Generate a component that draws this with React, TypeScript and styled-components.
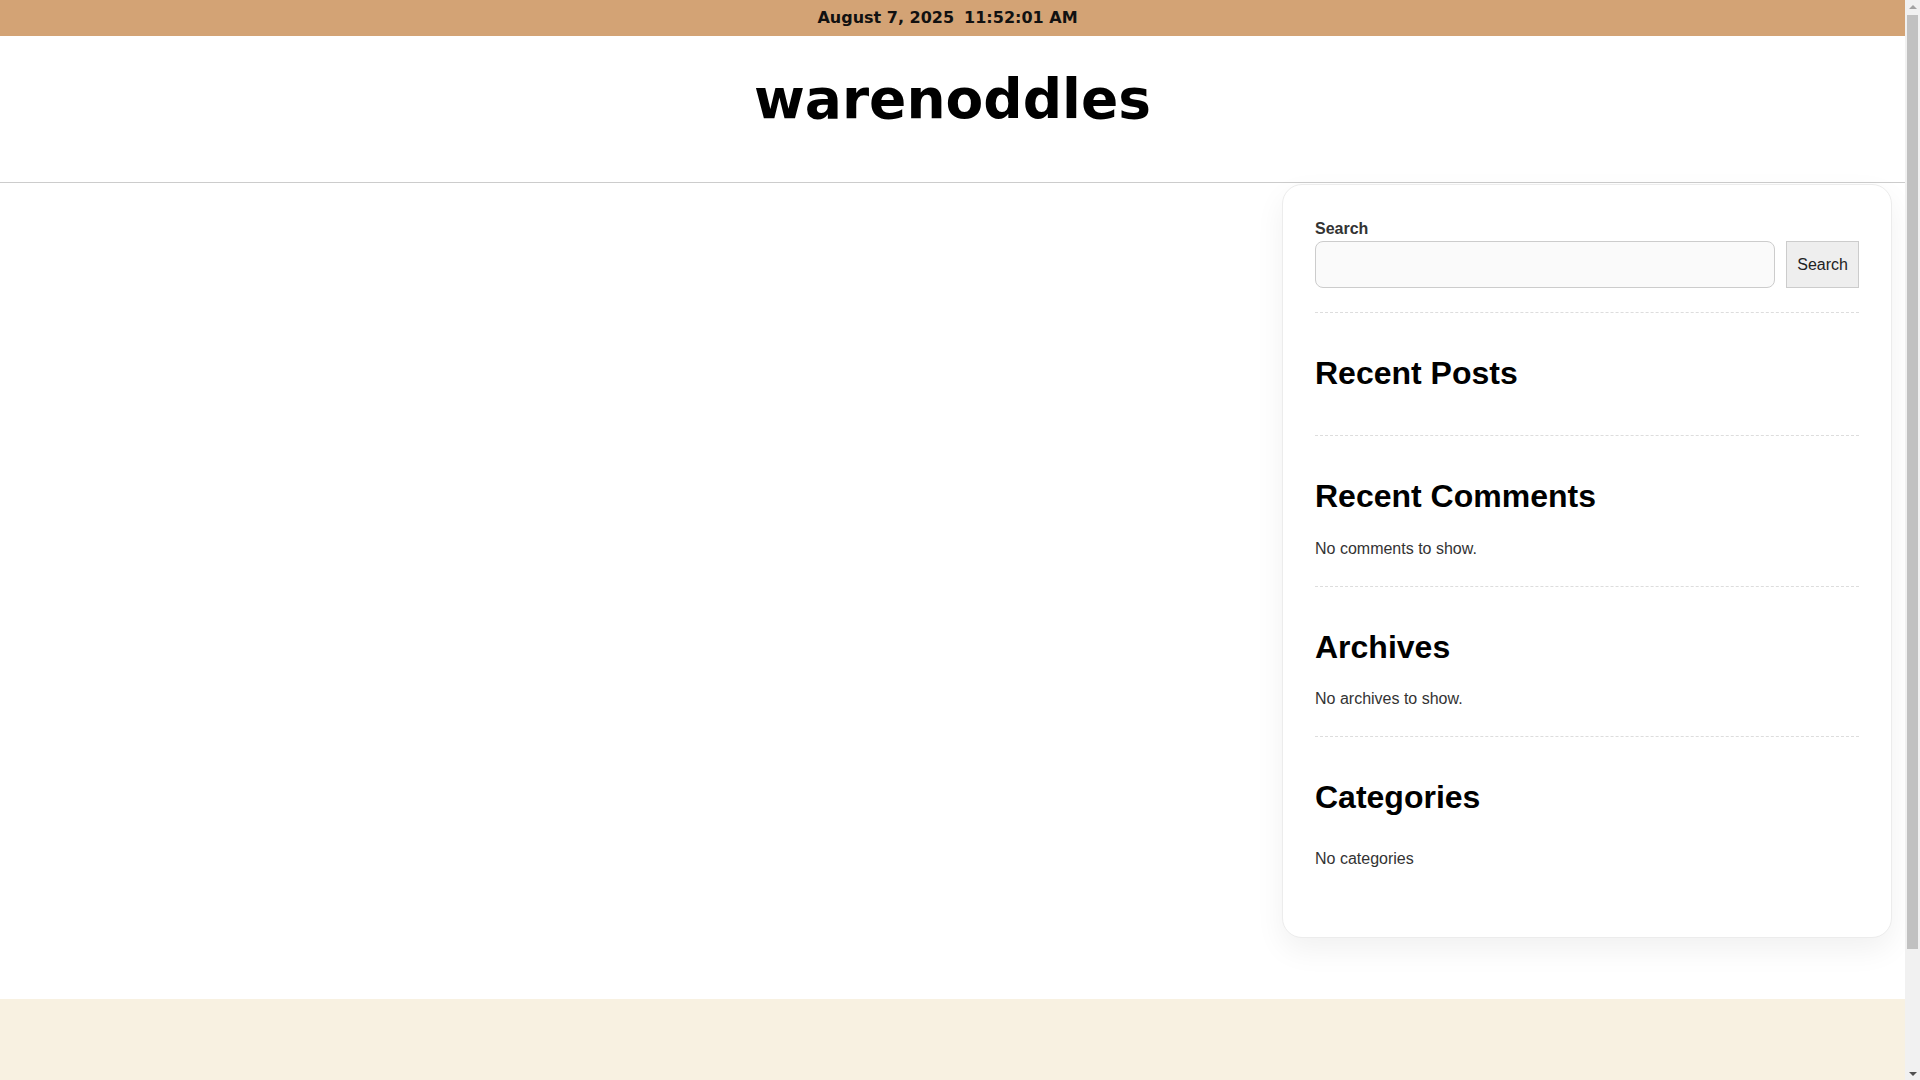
import styled, { createGlobalStyle } from "styled-components";

const GlobalStyle = createGlobalStyle`
  html, body {
    margin: 0;
    padding: 0;
    background: #fff;
    font-family: "Liberation Sans", Arial, sans-serif;
    color: #333;
  }
  * { box-sizing: border-box; }
`;

const Page = styled.div`
  margin-right: 15px;
`;

/* browser scrollbar drawn over the right edge */
const ScrollTrack = styled.div`
  position: fixed;
  top: 0;
  right: 0;
  width: 15px;
  height: 100vh;
  background: #f1f1f1;
  display: flex;
  flex-direction: column;
  align-items: center;
`;

const Arrow = styled.div<{ $down?: boolean }>`
  width: 0;
  height: 0;
  margin: 5px 0 4px;
  border-left: 4px solid transparent;
  border-right: 4px solid transparent;
  ${(p) =>
    p.$down
      ? "border-top: 4px solid #505050; margin-top: auto;"
      : "border-bottom: 4px solid #a3a3a3;"}
`;

const Thumb = styled.div`
  width: 11px;
  height: 934px;
  margin-top: 2px;
  background: #c1c1c1;
`;

const TopBar = styled.div`
  height: 36px;
  background: #d3a375;
  display: flex;
  justify-content: center;
  align-items: center;
  gap: 10px;
  padding-right: 10px;
  font-family: "DejaVu Sans", sans-serif;
  font-weight: 700;
  font-size: 16px;
  line-height: 36px;
  color: #111;
`;

const Header = styled.header`
  padding: 31px 0 50px;
  border-bottom: 1px solid #cccccc;
  text-align: center;
`;

const SiteTitle = styled.h1`
  margin: 0;
  font-family: "DejaVu Sans", sans-serif;
  font-weight: 700;
  font-size: 55px;
  line-height: 65px;
  color: #000;
`;

const Layout = styled.div`
  display: grid;
  grid-template-columns: 1fr 610px;
  column-gap: 30px;
  padding: 1px 13px 61px;
`;

const Main = styled.main`
  min-height: 100px;
`;

const Sidebar = styled.aside`
  background: #fff;
  border: 1px solid #ececec;
  border-radius: 20px;
  padding: 32px;
  box-shadow: 0 12px 30px rgba(0, 0, 0, 0.06);
`;

const Widget = styled.section`
  padding: 41px 0 25px;
  border-bottom: 1px dashed #dddddd;

  &:first-child {
    padding-top: 0;
    padding-bottom: 24px;
  }
  &:last-child {
    border-bottom: none;
    padding-bottom: 0;
  }
`;

const Label = styled.label`
  display: block;
  font-size: 16px;
  line-height: 24px;
  font-weight: 700;
  color: #333;
`;

const SearchRow = styled.div`
  display: flex;
  gap: 11px;
`;

const Input = styled.input`
  flex: 1;
  height: 47px;
  border: 1px solid #cccccc;
  border-radius: 8px;
  background: #fafafa;
  font: inherit;
  padding: 0 12px;
`;

const Button = styled.button`
  height: 47px;
  padding: 0 10px;
  border: 1px solid #cccccc;
  border-radius: 0;
  background: #eeeeee;
  font-family: "Liberation Sans", Arial, sans-serif;
  font-size: 16px;
  color: #222;
`;

const Title = styled.h2`
  margin: 0;
  font-size: 32px;
  line-height: 1.2;
  font-weight: 700;
  color: #000;
`;

const Text = styled.p`
  margin: 21px 0 0;
  font-size: 16px;
  line-height: 24px;
  color: #333;
`;

const List = styled.ul`
  list-style: none;
  margin: 18px 0 0;
  padding: 0;

  &:not(:empty) {
    margin: 20px 0 24px;
  }
`;

const Item = styled.li`
  padding: 10px 0;
  font-size: 16px;
  line-height: 24px;
  color: #333;
`;

const Footer = styled.footer`
  height: 221px;
  background: #f8f1e1;
`;

export default function App() {
  return (
    <>
      <GlobalStyle />
      <Page>
        <TopBar>
          <span>August 7, 2025</span>
          <span>11:52:01 AM</span>
        </TopBar>
        <Header>
          <SiteTitle>warenoddles</SiteTitle>
        </Header>
        <Layout>
          <Main />
          <Sidebar>
            <Widget>
              <Label htmlFor="s">Search</Label>
              <SearchRow>
                <Input id="s" type="text" />
                <Button>Search</Button>
              </SearchRow>
            </Widget>
            <Widget>
              <Title>Recent Posts</Title>
              <List />
            </Widget>
            <Widget>
              <Title>Recent Comments</Title>
              <Text>No comments to show.</Text>
            </Widget>
            <Widget>
              <Title>Archives</Title>
              <Text>No archives to show.</Text>
            </Widget>
            <Widget>
              <Title>Categories</Title>
              <List>
                <Item>No categories</Item>
              </List>
            </Widget>
          </Sidebar>
        </Layout>
        <Footer />
      </Page>
      <ScrollTrack>
        <Arrow />
        <Thumb />
        <Arrow $down />
      </ScrollTrack>
    </>
  );
}
